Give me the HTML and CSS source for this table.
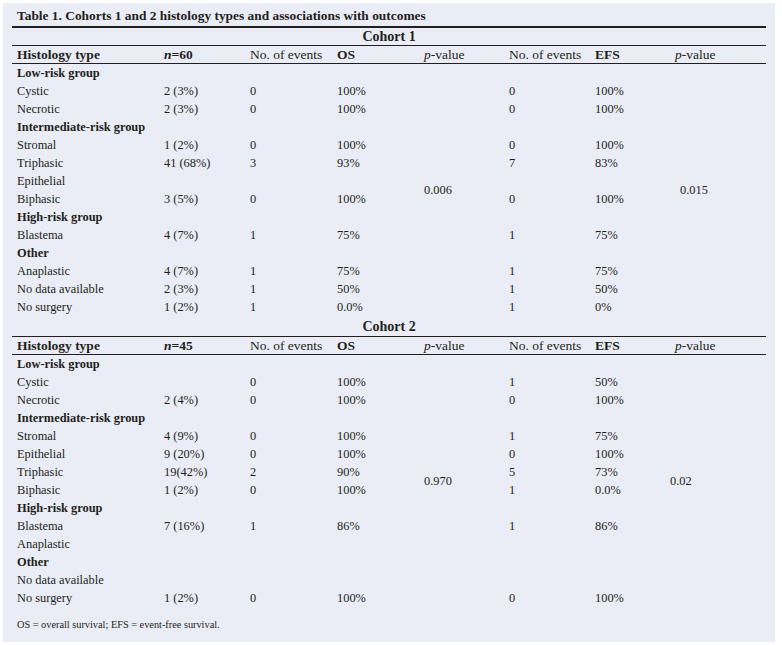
FILE: index.html
```html
<!DOCTYPE html>
<html lang="en">
<head>
<meta charset="utf-8">
<title>Table 1</title>
<link rel="stylesheet" href="styles.css">
</head>
<body>
<div class="panel">
  <div class="title">Table 1. Cohorts 1 and 2 histology types and associations with outcomes</div>
  <table class="data">
    <colgroup>
      <col class="c1"><col class="c2"><col class="c3"><col class="c4"><col class="c5"><col class="c6"><col class="c7"><col class="c8">
    </colgroup>
    <tbody>
      <tr class="cohort first"><td colspan="8">Cohort 1</td></tr>
      <tr class="head">
        <td class="b">Histology type</td><td class="b"><i>n</i>=60</td><td>No. of events</td><td class="b">OS</td><td><i>p</i>-value</td><td>No. of events</td><td class="b">EFS</td><td><i>p</i>-value</td>
      </tr>
      <tr><td class="grp">Low-risk group</td><td></td><td></td><td></td><td rowspan="14" class="pv">0.006</td><td></td><td></td><td rowspan="14" class="pv pv2">0.015</td></tr>
      <tr><td>Cystic</td><td>2 (3%)</td><td>0</td><td>100%</td><td>0</td><td>100%</td></tr>
      <tr><td>Necrotic</td><td>2 (3%)</td><td>0</td><td>100%</td><td>0</td><td>100%</td></tr>
      <tr><td class="grp">Intermediate-risk group</td><td></td><td></td><td></td><td></td><td></td></tr>
      <tr><td>Stromal</td><td>1 (2%)</td><td>0</td><td>100%</td><td>0</td><td>100%</td></tr>
      <tr><td>Triphasic</td><td>41 (68%)</td><td>3</td><td>93%</td><td>7</td><td>83%</td></tr>
      <tr><td>Epithelial</td><td></td><td></td><td></td><td></td><td></td></tr>
      <tr><td>Biphasic</td><td>3 (5%)</td><td>0</td><td>100%</td><td>0</td><td>100%</td></tr>
      <tr><td class="grp">High-risk group</td><td></td><td></td><td></td><td></td><td></td></tr>
      <tr><td>Blastema</td><td>4 (7%)</td><td>1</td><td>75%</td><td>1</td><td>75%</td></tr>
      <tr><td class="grp">Other</td><td></td><td></td><td></td><td></td><td></td></tr>
      <tr><td>Anaplastic</td><td>4 (7%)</td><td>1</td><td>75%</td><td>1</td><td>75%</td></tr>
      <tr><td>No data available</td><td>2 (3%)</td><td>1</td><td>50%</td><td>1</td><td>50%</td></tr>
      <tr><td>No surgery</td><td>1 (2%)</td><td>1</td><td>0.0%</td><td>1</td><td>0%</td></tr>

      <tr class="cohort second"><td colspan="8">Cohort 2</td></tr>
      <tr class="head">
        <td class="b">Histology type</td><td class="b"><i>n</i>=45</td><td>No. of events</td><td class="b">OS</td><td><i>p</i>-value</td><td>No. of events</td><td class="b">EFS</td><td><i>p</i>-value</td>
      </tr>
      <tr><td class="grp">Low-risk group</td><td></td><td></td><td></td><td rowspan="14" class="pv">0.970</td><td></td><td></td><td rowspan="14" class="pv pv3">0.02</td></tr>
      <tr><td>Cystic</td><td></td><td>0</td><td>100%</td><td>1</td><td>50%</td></tr>
      <tr><td>Necrotic</td><td>2 (4%)</td><td>0</td><td>100%</td><td>0</td><td>100%</td></tr>
      <tr><td class="grp">Intermediate-risk group</td><td></td><td></td><td></td><td></td><td></td></tr>
      <tr><td>Stromal</td><td>4 (9%)</td><td>0</td><td>100%</td><td>1</td><td>75%</td></tr>
      <tr><td>Epithelial</td><td>9 (20%)</td><td>0</td><td>100%</td><td>0</td><td>100%</td></tr>
      <tr><td>Triphasic</td><td>19(42%)</td><td>2</td><td>90%</td><td>5</td><td>73%</td></tr>
      <tr><td>Biphasic</td><td>1 (2%)</td><td>0</td><td>100%</td><td>1</td><td>0.0%</td></tr>
      <tr><td class="grp">High-risk group</td><td></td><td></td><td></td><td></td><td></td></tr>
      <tr><td>Blastema</td><td>7 (16%)</td><td>1</td><td>86%</td><td>1</td><td>86%</td></tr>
      <tr><td>Anaplastic</td><td></td><td></td><td></td><td></td><td></td></tr>
      <tr><td class="grp">Other</td><td></td><td></td><td></td><td></td><td></td></tr>
      <tr><td>No data available</td><td></td><td></td><td></td><td></td><td></td></tr>
      <tr><td>No surgery</td><td>1 (2%)</td><td>0</td><td>100%</td><td>0</td><td>100%</td></tr>
    </tbody>
  </table>
  <p class="note">OS = overall survival; EFS = event-free survival.</p>
</div>
</body>
</html>
```

FILE: styles.css
```css
html, body {
  margin: 0;
  padding: 0;
  background: #ffffff;
}

.panel {
  margin: 3px 0 0 3px;
  width: 772px;
  height: 639px;
  box-sizing: border-box;
  padding: 0 9px;
  background: #eaecf6;
  color: #231f20;
  font-family: "Liberation Serif", "Times New Roman", serif;
  font-size: 12.4px;
}

.title {
  padding: 5px 5px 2px;
  height: 16px;
  line-height: 16px;
  font-size: 13.4px;
  font-weight: bold;
  white-space: nowrap;
  border-bottom: 2px solid #231f20;
}

.data {
  width: 754px;
  table-layout: fixed;
  border-collapse: collapse;
}

.c1 { width: 147px; }
.c2 { width: 86px; }
.c3 { width: 87px; }
.c4 { width: 87px; }
.c5 { width: 85px; }
.c6 { width: 86px; }
.c7 { width: 80px; }
.c8 { width: 96px; }

.data td {
  padding: 0 5px;
  height: 18px;
  line-height: 18px;
  white-space: nowrap;
  vertical-align: middle;
  text-align: left;
}

.data .cohort td {
  text-align: center;
  font-weight: bold;
  font-size: 14px;
  border-bottom: 1px solid #231f20;
  padding: 0;
}

.data .cohort.first td {
  height: 17px;
  line-height: 17px;
}

.data .cohort.second td {
  height: 18px;
  line-height: 18px;
  padding-top: 2px;
}

.data .head td {
  font-size: 13.5px;
  height: 17px;
  line-height: 17px;
  border-bottom: 1px solid #231f20;
}

.data .head td.b {
  font-weight: bold;
}

.data td.grp {
  font-weight: bold;
}

.data td.pv {
  vertical-align: middle;
}

.data td.pv2 {
  padding-left: 10px;
}

.data td.pv3 {
  padding-left: 0;
}

.note {
  margin: 12px 0 0;
  padding-left: 5px;
  font-size: 10.3px;
  line-height: 12px;
}
```
